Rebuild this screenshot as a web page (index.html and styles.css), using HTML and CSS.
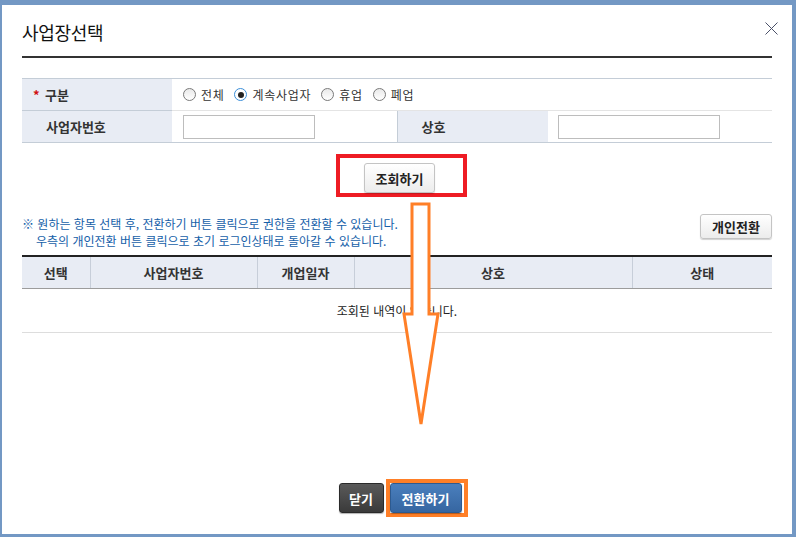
FILE: index.html
```html
<!DOCTYPE html>
<html lang="ko">
  <head>
    <meta charset="UTF-8" />
    <meta name="viewport" content="width=device-width, initial-scale=1.0" />
    <title>사업장선택</title>
    <link rel="stylesheet" href="styles.css">
  </head>
  <body>
    <div class="modal">
      <div class="modal-head">
        <h1 class="modal-title">사업장선택</h1>
      </div>
      <button type="button" class="close-btn" aria-label="닫기">
        <svg width="13" height="13" viewBox="0 0 13 13">
          <path d="M0.5 0.5 L12.5 12.5 M12.5 0.5 L0.5 12.5" stroke="#4a5068" stroke-width="1" fill="none" />
        </svg>
      </button>

      <div class="modal-body">
        <table class="search-table">
          <colgroup>
            <col style="width: 150px" />
            <col style="width: 225px" />
            <col style="width: 151px" />
            <col />
          </colgroup>
          <tr class="row-kind">
            <th class="req">구분</th>
            <td colspan="3">
              <div class="radio-list">
                <label class="radio"><input type="radio" name="kind" value="all" /><span>전체</span></label>
                <label class="radio"><input type="radio" name="kind" value="active" checked /><span>계속사업자</span></label>
                <label class="radio"><input type="radio" name="kind" value="pause" /><span>휴업</span></label>
                <label class="radio"><input type="radio" name="kind" value="closed" /><span>폐업</span></label>
              </div>
            </td>
          </tr>
          <tr>
            <th>사업자번호</th>
            <td><input type="text" class="text-input biz-no" /></td>
            <th class="th-side">상호</th>
            <td><input type="text" class="text-input biz-name" /></td>
          </tr>
        </table>

        <div class="search-actions">
          <div class="mark-red">
            <button type="button" class="btn btn-light btn-search">조회하기</button>
          </div>
        </div>

        <div class="notice-row">
          <div class="notice">
            <p class="notice-line">※ 원하는 항목 선택 후, 전환하기 버튼 클릭으로 권한을 전환할 수 있습니다.</p>
            <p class="notice-line indent">우측의 개인전환 버튼 클릭으로 초기 로그인상태로 돌아갈 수 있습니다.</p>
          </div>
          <button type="button" class="btn btn-light btn-personal">개인전환</button>
        </div>

        <table class="result-table">
          <colgroup>
            <col style="width: 68px" />
            <col style="width: 167px" />
            <col style="width: 97px" />
            <col style="width: 278px" />
            <col />
          </colgroup>
          <thead>
            <tr>
              <th>선택</th>
              <th>사업자번호</th>
              <th>개업일자</th>
              <th>상호</th>
              <th>상태</th>
            </tr>
          </thead>
          <tbody>
            <tr>
              <td colspan="5" class="empty">조회된 내역이 없습니다.</td>
            </tr>
          </tbody>
        </table>
      </div>

      <div class="modal-foot">
        <button type="button" class="btn btn-dark">닫기</button>
        <div class="mark-orange">
          <button type="button" class="btn btn-blue">전환하기</button>
        </div>
      </div>

      <!-- 안내용 화살표 -->
      <svg class="guide-arrow" width="45" height="232" viewBox="0 0 45 232">
        <polygon points="12,4 29,4 29,114 38,114 21,224 4,114 12,114"
          fill="#ffffff" stroke="#ff7f27" stroke-width="3" stroke-linejoin="miter" />
      </svg>
    </div>
  </body>
</html>
```

FILE: styles.css
```css
* {
  margin: 0;
  padding: 0;
  box-sizing: border-box;
}

body {
  font-family: "Noto Sans CJK KR", "Noto Sans", sans-serif;
  font-size: 12px;
  color: #222;
  background-color: #ffffff;
}

.modal {
  position: relative;
  width: 796px;
  height: 537px;
  background-color: #ffffff;
  border-style: solid;
  border-color: #7398c4;
  border-width: 5px 4px 3px 2px;
  display: flex;
  flex-direction: column;
}

.modal-head {
  margin: 0 20px;
  height: 53px;
  padding-top: 3px;
  display: flex;
  align-items: center;
  border-bottom: 2px solid #333333;
}

.modal-title {
  font-size: 18px;
  font-weight: normal;
  color: #111;
  letter-spacing: -0.3px;
}

.close-btn {
  position: absolute;
  top: 17px;
  right: 14px;
  width: 13px;
  height: 13px;
  border: none;
  background: none;
  cursor: pointer;
  display: block;
}

.close-btn svg {
  display: block;
}

.modal-body {
  padding: 20px 20px 0;
}

/* 검색 영역 */
.search-table {
  width: 100%;
  border-collapse: collapse;
  table-layout: fixed;
  border-top: 1px solid #c4cdd7;
  border-bottom: 1px solid #c4cdd7;
}

.search-table th,
.search-table td {
  height: 32px;
  padding: 0;
  vertical-align: middle;
}

.search-table th {
  background-color: #e8ecf4;
  text-align: left;
  padding-left: 24px;
  font-size: 13px;
  font-weight: bold;
  color: #333;
}

.search-table td {
  padding-left: 11px;
}

.search-table .row-kind th {
  border-bottom: 1px solid #c4cdd7;
}

.search-table .row-kind td {
  border-bottom: 1px solid #e4e4e4;
}

.search-table .th-side {
  border-left: 1px solid #c4cdd7;
}

.search-table th.req::before {
  content: "*";
  display: inline-block;
  width: 12px;
  margin-left: -13px;
  color: #d01010;
  font-weight: bold;
}

.radio-list {
  display: flex;
  align-items: center;
  gap: 10px;
}

.radio {
  display: flex;
  align-items: center;
  gap: 5px;
  color: #333;
  font-size: 12px;
  letter-spacing: 0.7px;
  cursor: pointer;
}

.radio input {
  appearance: none;
  -webkit-appearance: none;
  width: 13px;
  height: 13px;
  border: 1px solid #7a7a7a;
  border-radius: 50%;
  background: linear-gradient(#e9e9e9, #ffffff);
  display: grid;
  place-content: center;
  margin: 0;
}

.radio input:checked {
  border-color: #3c8fd9;
  background: #ffffff;
}

.radio input:checked::after {
  content: "";
  width: 6px;
  height: 6px;
  border-radius: 50%;
  background-color: #222;
}

.text-input {
  height: 24px;
  border: 1px solid #bdbdbd;
  background-color: #fff;
  font-size: 12px;
  padding: 0 4px;
}

.text-input.biz-no {
  width: 132px;
}

.text-input.biz-name {
  width: 162px;
  margin-left: -1px;
}

.search-actions {
  display: flex;
  justify-content: center;
  margin-top: 11px;
  padding-left: 9px;
}

.mark-red {
  border: 4px solid #ee1c24;
  padding: 5px 28px 0 24px;
}

/* 버튼 */
.btn {
  font-family: inherit;
  font-size: 13px;
  font-weight: bold;
  border-radius: 3px;
  cursor: pointer;
  display: flex;
  align-items: center;
  justify-content: center;
}

.btn-light {
  color: #222;
  background: linear-gradient(#ffffff, #ececec);
  border: 1px solid #c4c4c4;
  box-shadow: 0 1px 1px rgba(0, 0, 0, 0.18);
}

.btn-search {
  width: 71px;
  height: 30px;
}

.btn-personal {
  width: 72px;
  height: 25px;
}

.btn-dark {
  width: 45px;
  height: 30px;
  color: #fff;
  background: linear-gradient(#5a5a5a, #3a3a3a);
  border: 1px solid #2a2a2a;
  box-shadow: 0 1px 1px rgba(0, 0, 0, 0.3);
}

.btn-blue {
  width: 72px;
  height: 30px;
  color: #fff;
  background: linear-gradient(#4a7fbd, #3666a1);
  border: 1px solid #2d5a90;
  box-shadow: 0 1px 1px rgba(0, 0, 0, 0.3);
}

/* 안내 */
.notice-row {
  display: flex;
  justify-content: space-between;
  align-items: flex-start;
  height: 58px;
  padding-top: 17px;
}

.notice {
  margin-top: 1px;
  color: #1560a8;
  font-size: 12px;
  line-height: 17px;
}

.notice-line {
  white-space: nowrap;
}

.notice-line.indent {
  padding-left: 14px;
}

/* 결과 목록 */
.result-table {
  width: 100%;
  border-collapse: collapse;
  table-layout: fixed;
  border-top: 2px solid #222;
}

.result-table th {
  height: 32px;
  background-color: #e8ecf4;
  font-size: 13px;
  font-weight: bold;
  color: #333;
  border-bottom: 1px solid #9c9c9c;
  border-left: 1px solid #c7ced9;
}

.result-table th:first-child {
  border-left: none;
}

.result-table td.empty {
  height: 44px;
  text-align: center;
  color: #222;
  font-size: 12px;
  border-bottom: 1px solid #dddddd;
}

.modal-foot {
  margin-top: auto;
  padding-bottom: 17px;
  display: flex;
  justify-content: center;
  align-items: center;
  gap: 2px;
  padding-left: 12px;
}

.mark-orange {
  border: 4px solid #ff7f27;
  padding-right: 2px;
}

.guide-arrow {
  position: absolute;
  left: 398px;
  top: 195px;
}
```
